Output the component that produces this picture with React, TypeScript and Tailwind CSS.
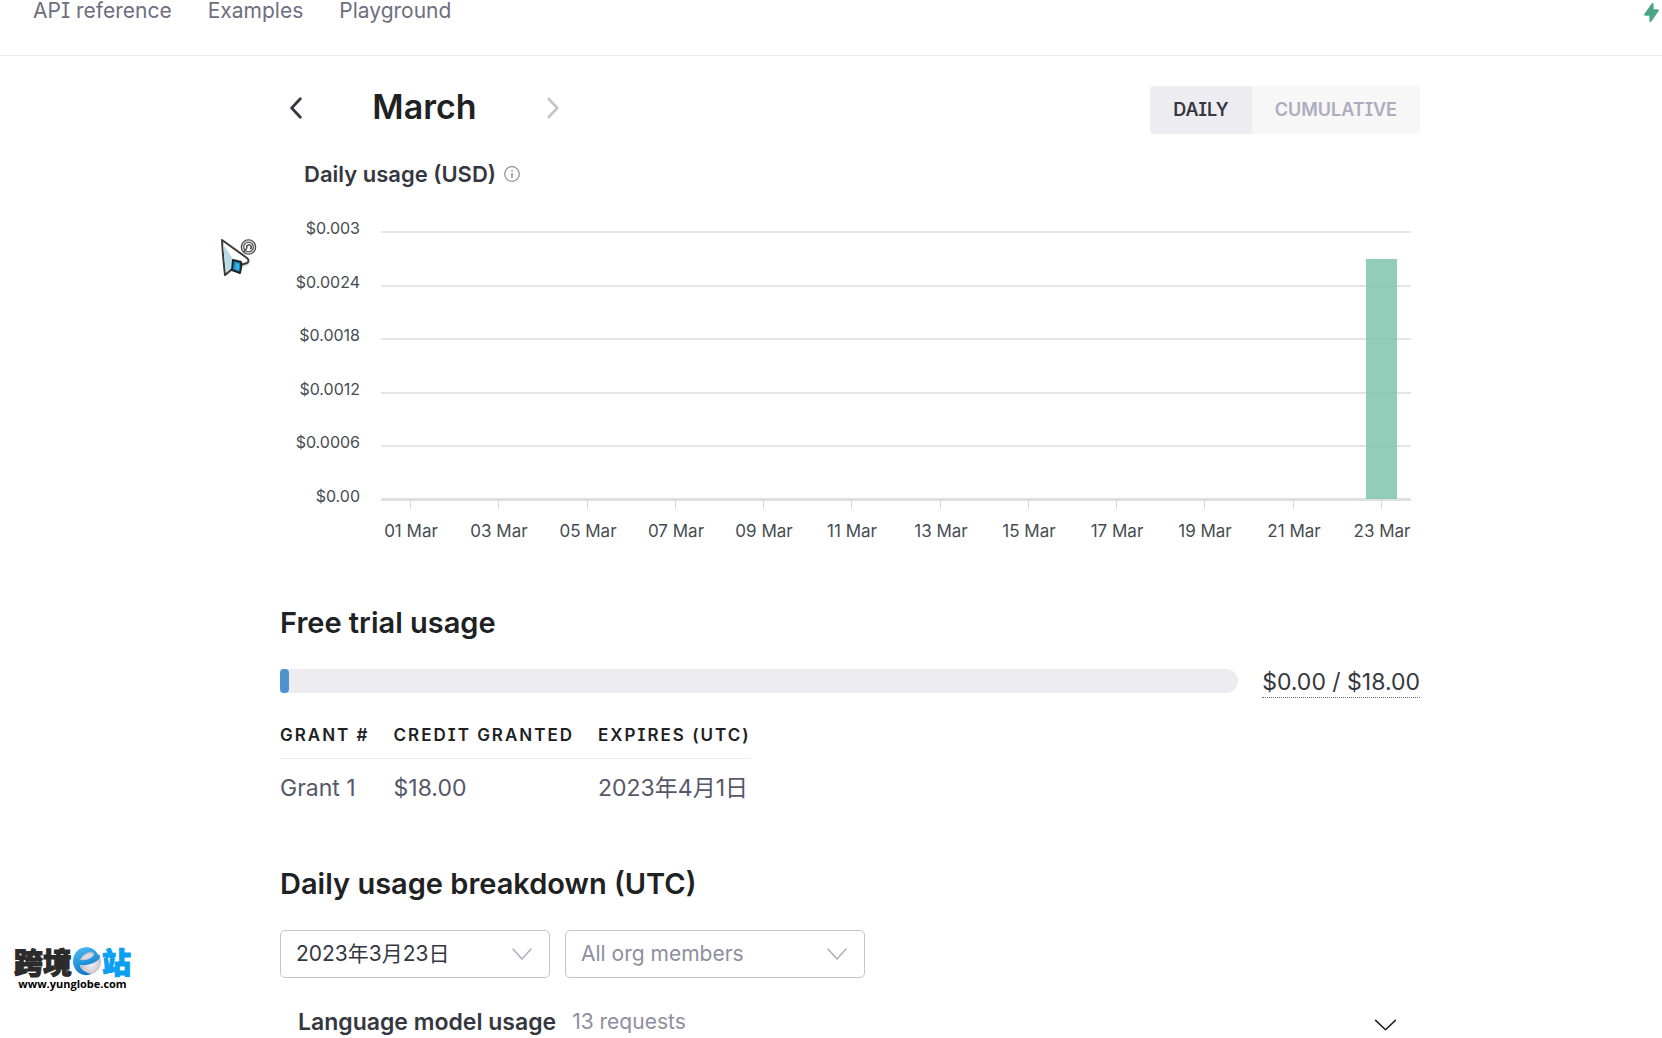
import React from "react";

const FONT = "font-[Inter,'Noto_Sans_CJK_SC',sans-serif]";

const yLabels = ["$0.003", "$0.0024", "$0.0018", "$0.0012", "$0.0006", "$0.00"];
const xLabels = ["01", "03", "05", "07", "09", "11", "13", "15", "17", "19", "21", "23"];

function Chevron({ points, className }: { points: string; className: string }) {
  return (
    <svg viewBox="0 0 24 24" fill="none" stroke="currentColor" strokeLinecap="round" strokeLinejoin="round" className={className} aria-hidden="true">
      <polyline points={points} />
    </svg>
  );
}

function Header() {
  return (
    <header className="flex h-14 items-start justify-between border-b border-[#ebebeb] pl-[33px]">
      <nav className="flex gap-9 text-[21px] leading-[22px] text-[#6e6e80] [font-feature-settings:'cv08']">
        <a href="#api">API reference</a>
        <a href="#examples">Examples</a>
        <a href="#playground">Playground</a>
      </nav>
      <a href="#upgrade" aria-label="Upgrade" className="mt-0.5">
        <svg viewBox="0 0 20 20" fill="#4aa584" className="size-[21px]">
          <path d="M11.3 1.046A1 1 0 0112 2v5h4a1 1 0 01.82 1.573l-7 10A1 1 0 018 18v-5H4a1 1 0 01-.82-1.573l7-10a1 1 0 011.12-.38z" />
        </svg>
      </a>
    </header>
  );
}

function UsageChart() {
  return (
    <svg viewBox="0 0 1140 340" className="block w-full" role="img" aria-label="Daily usage chart">
      {yLabels.map((label, i) => (
        <g key={label}>
          <text x="80" y={34 + Math.round(i * 53.6)} textAnchor="end" className="fill-[#454c52] text-[16px]">
            {label}
          </text>
          {i < 5 && <rect x="101" y={31 + Math.round(i * 53.5)} width="1030" height="2" fill="#e5e5e5" />}
        </g>
      ))}
      <rect x="101" y="298" width="1030" height="3" fill="#dfdfdf" />
      {xLabels.map((day, i) => {
        const x = Math.round(131 + i * 88.25);
        return (
          <g key={day}>
            <rect x={x - 1} y="301" width="1" height="8" fill="#d8d8d8" />
            <text x={x} y="337" textAnchor="middle" className="fill-[#454c52] text-[17px]">
              {day} Mar
            </text>
          </g>
        );
      })}
      <rect x="1086" y="59" width="31" height="240" fill="#7bc3ab" fillOpacity="0.83" />
    </svg>
  );
}

function SelectBox({ label, option, className }: { label: string; option: string; className: string }) {
  return (
    <div className="relative">
      <select
        aria-label={label}
        className={`h-12 appearance-none rounded-[5px] border border-[#c5c5d2] bg-white pl-[15px] pr-12 text-[21px] outline-none ${className}`}
      >
        <option>{option}</option>
      </select>
      <Chevron points="3,7 12,17 21,7" className="pointer-events-none absolute right-4 top-3 size-6 stroke-[1.5] text-[#acacbe]" />
    </div>
  );
}

function MousePointer() {
  return (
    <svg viewBox="0 0 40 42" className="pointer-events-none absolute left-[219px] top-[236px] h-[42px] w-10" aria-hidden="true">
      <path d="M3 4 L30 26 Q28 30 21 30 L13 33 L7 39 Q4 22 3 4Z" fill="#999" opacity="0.35" transform="translate(1 1)" />
      <path d="M3 4 L28 22 Q31 25 28 27 L21 29 L13 33 L6 39 Q4 22 3 4Z" fill="#fff" stroke="#3a3a3a" strokeWidth="2" strokeLinejoin="round" />
      <path d="M4 8 L14 23 L12 32 L7 36Z" fill="#b9dbe6" />
      <path d="M14 24 L22 26 Q23 31 21 37 L13 34Z" fill="#1790c8" stroke="#222" strokeWidth="2" strokeLinejoin="round" />
      <path d="M17 27 L20 28 L20 34 L16 33Z" fill="#37b4e2" />
      <circle cx="29.500" cy="11" r="6" fill="#fff" stroke="#444" strokeWidth="3.600" />
      <circle cx="29.500" cy="11" r="6" fill="none" stroke="#d5d5d5" strokeWidth="1.300" />
      <path d="M25 16 L28 12 M28 12 a2.200 2.200 0 1 1 3 1" fill="none" stroke="#555" strokeWidth="1.600" />
    </svg>
  );
}

function Watermark() {
  return (
    <a href="#yunglobe" className="absolute left-3.5 top-[946px] flex flex-col items-center text-black">
      <span className="flex items-center font-['Noto_Sans_CJK_SC',sans-serif] text-[29px] font-black leading-[30px]">
        <span className="text-[#2b2b2b] [-webkit-text-stroke:1px_#2b2b2b]">跨境</span>
        <svg viewBox="0 0 30 30" className="size-[30px]" aria-hidden="true">
          <defs>
            <radialGradient id="globe" cx="0.600" cy="0.600" r="0.600">
              <stop offset="0" stopColor="#f4f2f5" />
              <stop offset="1" stopColor="#b0aab4" />
            </radialGradient>
            <linearGradient id="ring" x1="0" y1="0" x2="0.400" y2="1">
              <stop offset="0" stopColor="#4fc0f5" />
              <stop offset="1" stopColor="#0b78c8" />
            </linearGradient>
          </defs>
          <circle cx="16.500" cy="16" r="12.500" fill="url(#globe)" />
          <path d="M26 9 C23 1 13 -1 6 4 C-2 11 0 24 9 28 C13 30 17 29 19 28 C12 26 8 23 8 19 C17 20 26 16 28 11 C28 9 27 8 26 9Z M8 14 C11 8 17 4 22 7 C23 11 15 15 8 14Z" fill="url(#ring)" fillRule="evenodd" />
          <path d="M9 13 C12 9 17 6 21 8 C20 11 15 13 9 13Z" fill="#d9dce6" />
        </svg>
        <span className="text-[#0a9ff0] [-webkit-text-stroke:1px_#0a9ff0]">站</span>
      </span>
      <span className="font-['Open_Sans',sans-serif] text-[11px] font-bold leading-[15px]">www.yunglobe.com</span>
    </a>
  );
}

export default function App() {
  return (
    <div className={`relative h-screen overflow-hidden bg-white text-[#202123] ${FONT}`}>
      <Header />
      <main className="pl-[280px] pr-[242px] pt-[30px]">
        <div className="flex justify-between">
          <div className="flex h-11 w-[286px] items-center justify-between pl-[3px]">
            <button type="button" aria-label="Previous month" className="text-[#353740]">
              <Chevron points="16,3.500 8,12 16,20.500" className="size-[26px] stroke-[2.6]" />
            </button>
            <h1 className="pb-0.5 text-[34px] font-semibold leading-10">March</h1>
            <button type="button" aria-label="Next month" className="text-[#c4c4c4]">
              <Chevron points="8,3.500 16,12 8,20.500" className="size-[26px] stroke-[2.4]" />
            </button>
          </div>
          <div className="flex rounded bg-[#f7f7f8] text-lg font-semibold [font-feature-settings:'cv08']">
            <button type="button" className="h-12 rounded bg-[#ececf1] px-[23px] text-[#353740]">DAILY</button>
            <button type="button" className="h-12 px-[23px] text-[#acacbe]">CUMULATIVE</button>
          </div>
        </div>

        <div className="mt-6 flex items-center gap-2 pl-6">
          <h2 className="text-[22px] font-semibold leading-8 text-[#353740]">Daily usage (USD)</h2>
          <svg viewBox="0 0 16 16" fill="none" stroke="#8e8ea0" className="size-4" aria-hidden="true">
            <circle cx="8" cy="8" r="7.300" strokeWidth="1.200" />
            <path d="M8 7v5M8 4v1.500" strokeWidth="1.500" />
          </svg>
        </div>

        <div className="mt-[10px]">
          <UsageChart />
        </div>

        <h2 className="mt-[63px] text-[29px] font-semibold leading-10">Free trial usage</h2>
        <div className="mt-5 flex items-center gap-6">
          <div className="h-6 grow overflow-hidden rounded-l-md rounded-r-full bg-[#ececf1]" role="progressbar" aria-label="Free trial usage" aria-valuenow={0}>
            <div className="h-full w-[9px] rounded bg-[#4f93ce]" />
          </div>
          <span className="border-b border-dotted border-[#6e6e80] pt-1 text-[23px] leading-[30px] text-[#353740]">$0.00 / $18.00</span>
        </div>

        <table className="mt-4 border-collapse text-left">
          <thead>
            <tr className="border-b border-[#ececec] text-[17px] tracking-[2px] [font-feature-settings:'cv08']">
              <th className="h-11 pr-6 font-semibold">GRANT #</th>
              <th className="pr-6 font-semibold">CREDIT GRANTED</th>
              <th className="font-semibold">EXPIRES (UTC)</th>
            </tr>
          </thead>
          <tbody>
            <tr className="text-[23px] text-[#565869]">
              <td className="h-[59px]">Grant 1</td>
              <td>$18.00</td>
              <td className="whitespace-nowrap">2023年4月1日</td>
            </tr>
          </tbody>
        </table>

        <h2 className="mt-[47px] text-[29px] font-semibold leading-10">Daily usage breakdown (UTC)</h2>
        <div className="mt-[26px] flex gap-[15px]">
          <SelectBox label="Date" option="2023年3月23日" className="w-[270px] text-[#353740]" />
          <SelectBox label="Organization member" option="All org members" className="w-[300px] text-[#8e8ea0]" />
        </div>

        <button type="button" className="mt-7 flex w-full items-center pl-[18px] pr-[22px] text-left">
          <span className="text-[23px] font-semibold leading-8 text-[#353740]">Language model usage</span>
          <span className="ml-4 grow text-[21px] leading-8 text-[#8e8ea0]">13 requests</span>
          <Chevron points="2.500,8 12,17 21.500,8" className="mt-1 size-[25px] stroke-[1.5] text-[#202123]" />
        </button>
      </main>
      <Watermark />
      <MousePointer />
    </div>
  );
}
